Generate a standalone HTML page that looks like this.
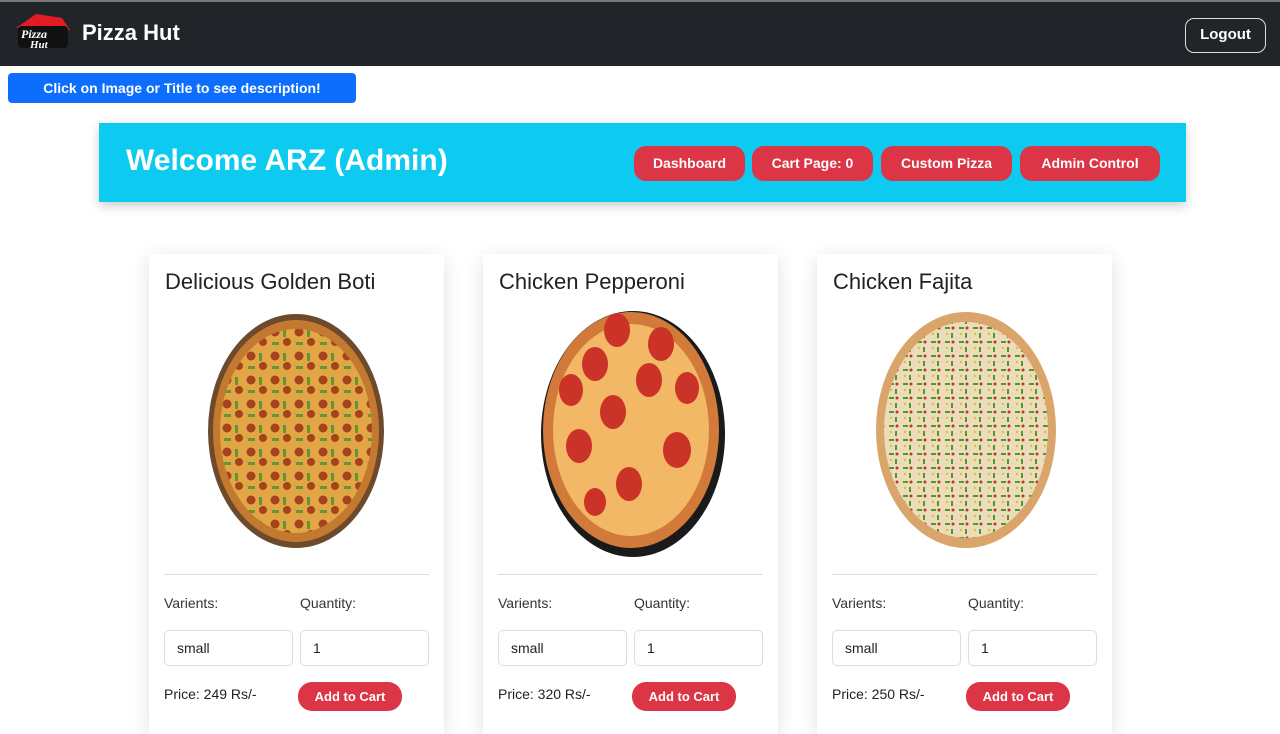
<!DOCTYPE html>
<html><head><style>
*{box-sizing:border-box;margin:0;padding:0}
body{width:1280px;height:720px;overflow:hidden;background:#fff;font-family:"Liberation Sans",sans-serif;position:relative}
.nav{position:absolute;left:0;top:0;width:1280px;height:66px;background:#212529;border-top:2px solid #777}
.brand{position:absolute;left:82px;top:18px;color:#fff;font-size:22px;font-weight:bold}
.logout{position:absolute;left:1185px;top:16px;width:81px;height:35px;border:1.5px solid #ddd;border-radius:9px;color:#fff;font-size:15px;font-weight:bold;text-align:center;line-height:32px}
.tip{position:absolute;left:8px;top:73px;width:348px;height:30px;background:#0d6efd;border-radius:4px;color:#fff;font-size:14px;font-weight:bold;text-align:center;line-height:30px}
.ban{position:absolute;left:99px;top:123px;width:1087px;height:79px;background:#0dcaf0;box-shadow:0 4px 10px rgba(0,0,0,.2)}
.ban h1{position:absolute;left:27px;top:21px;color:#fff;font-size:30px}
.rb{position:absolute;top:23px;height:35px;background:#dc3545;color:#fff;border-radius:12px;font-size:14px;font-weight:bold;text-align:center;line-height:35px}
.card{position:absolute;top:254px;width:295px;height:480px;background:#fff;box-shadow:0 4px 18px rgba(0,0,0,.12)}
.card h2{position:absolute;left:16px;top:15px;font-size:22px;font-weight:normal;color:#222}
.card svg{position:absolute;left:0;top:0}
.hr{position:absolute;left:15px;top:320px;width:265px;border-top:1.5px solid #ddd}
.lb{position:absolute;top:341px;font-size:14px;color:#333}
.in{position:absolute;top:376px;width:129px;height:36px;border:1px solid #ddd;border-radius:5px;font-size:14px;padding:9px 12px;color:#222}
.pr{position:absolute;left:15px;top:432px;font-size:14px;color:#222}
.ac{position:absolute;left:149px;top:428px;width:104px;height:29px;background:#dc3545;color:#fff;border-radius:14px;font-size:13px;font-weight:bold;text-align:center;line-height:29px}
</style></head><body>
<div class="nav">
<svg style="position:absolute;left:12px;top:8px" width="60" height="44"><path d="M4 18 L24 4 L50 8 L58 20 Z" fill="#e31b23"/><rect x="6" y="16" width="50" height="22" rx="4" fill="#111"/><text x="9" y="28" font-size="12" font-style="italic" font-weight="bold" fill="#fff" font-family="Liberation Serif">Pizza</text><text x="18" y="38" font-size="11" font-style="italic" font-weight="bold" fill="#fff" font-family="Liberation Serif">Hut</text></svg>
<div class="brand">Pizza Hut</div>
<div class="logout">Logout</div>
</div>
<div class="tip">Click on Image or Title to see description!</div>
<div class="ban"><h1>Welcome ARZ (Admin)</h1>
<div class="rb" style="left:535px;width:111px">Dashboard</div>
<div class="rb" style="left:653px;width:121px">Cart Page: 0</div>
<div class="rb" style="left:782px;width:131px">Custom Pizza</div>
<div class="rb" style="left:921px;width:140px">Admin Control</div>
</div>

<div class="card" style="left:149px"><h2>Delicious Golden Boti</h2>
<svg width="295" height="320"><defs><pattern id="p1" width="24" height="24" patternUnits="userSpaceOnUse"><rect width="24" height="24" fill="#e3a646"/><circle cx="6" cy="6" r="4.5" fill="#a4431c"/><circle cx="18" cy="16" r="4" fill="#a4431c"/><rect x="14" y="3" width="3" height="8" fill="#5f9a2e"/><rect x="3" y="16" width="7" height="3" fill="#5f9a2e"/></pattern></defs>
<ellipse cx="147" cy="177" rx="88" ry="117" fill="#6e4a2c"/><ellipse cx="147" cy="177" rx="83" ry="111" fill="#c37a30"/><ellipse cx="147" cy="177" rx="76" ry="102" fill="url(#p1)"/></svg>
<div class="hr"></div><div class="lb" style="left:15px">Varients:</div><div class="lb" style="left:151px">Quantity:</div>
<div class="in" style="left:15px">small</div><div class="in" style="left:151px">1</div>
<div class="pr">Price: 249 Rs/-</div><div class="ac">Add to Cart</div></div>

<div class="card" style="left:483px"><h2>Chicken Pepperoni</h2>
<svg width="295" height="320"><ellipse cx="150" cy="180" rx="92" ry="123" fill="#1a1a1a"/><ellipse cx="148" cy="176" rx="88" ry="118" fill="#d27a3a"/><ellipse cx="148" cy="176" rx="78" ry="106" fill="#f2b866"/>
<g fill="#cc3328"><ellipse cx="134" cy="76" rx="13" ry="17"/><ellipse cx="178" cy="90" rx="13" ry="17"/><ellipse cx="112" cy="110" rx="13" ry="17"/><ellipse cx="166" cy="126" rx="13" ry="17"/><ellipse cx="204" cy="134" rx="12" ry="16"/><ellipse cx="88" cy="136" rx="12" ry="16"/><ellipse cx="130" cy="158" rx="13" ry="17"/><ellipse cx="96" cy="192" rx="13" ry="17"/><ellipse cx="194" cy="196" rx="14" ry="18"/><ellipse cx="146" cy="230" rx="13" ry="17"/><ellipse cx="112" cy="248" rx="11" ry="14"/></g></svg>
<div class="hr"></div><div class="lb" style="left:15px">Varients:</div><div class="lb" style="left:151px">Quantity:</div>
<div class="in" style="left:15px">small</div><div class="in" style="left:151px">1</div>
<div class="pr">Price: 320 Rs/-</div><div class="ac">Add to Cart</div></div>

<div class="card" style="left:817px"><h2>Chicken Fajita</h2>
<svg width="295" height="320"><defs><pattern id="p3" width="14" height="14" patternUnits="userSpaceOnUse"><rect width="14" height="14" fill="#ecdcbc"/><rect x="2" y="3" width="5" height="2" fill="#4c9a2a"/><rect x="8" y="9" width="2" height="5" fill="#4c9a2a"/><circle cx="10" cy="4" r="1.5" fill="#b83a22"/><circle cx="4" cy="10" r="1.2" fill="#e0c030"/></pattern></defs>
<ellipse cx="149" cy="176" rx="90" ry="118" fill="#d9a56a"/><ellipse cx="149" cy="176" rx="82" ry="108" fill="url(#p3)"/></svg>
<div class="hr"></div><div class="lb" style="left:15px">Varients:</div><div class="lb" style="left:151px">Quantity:</div>
<div class="in" style="left:15px">small</div><div class="in" style="left:151px">1</div>
<div class="pr">Price: 250 Rs/-</div><div class="ac">Add to Cart</div></div>
</body></html>
